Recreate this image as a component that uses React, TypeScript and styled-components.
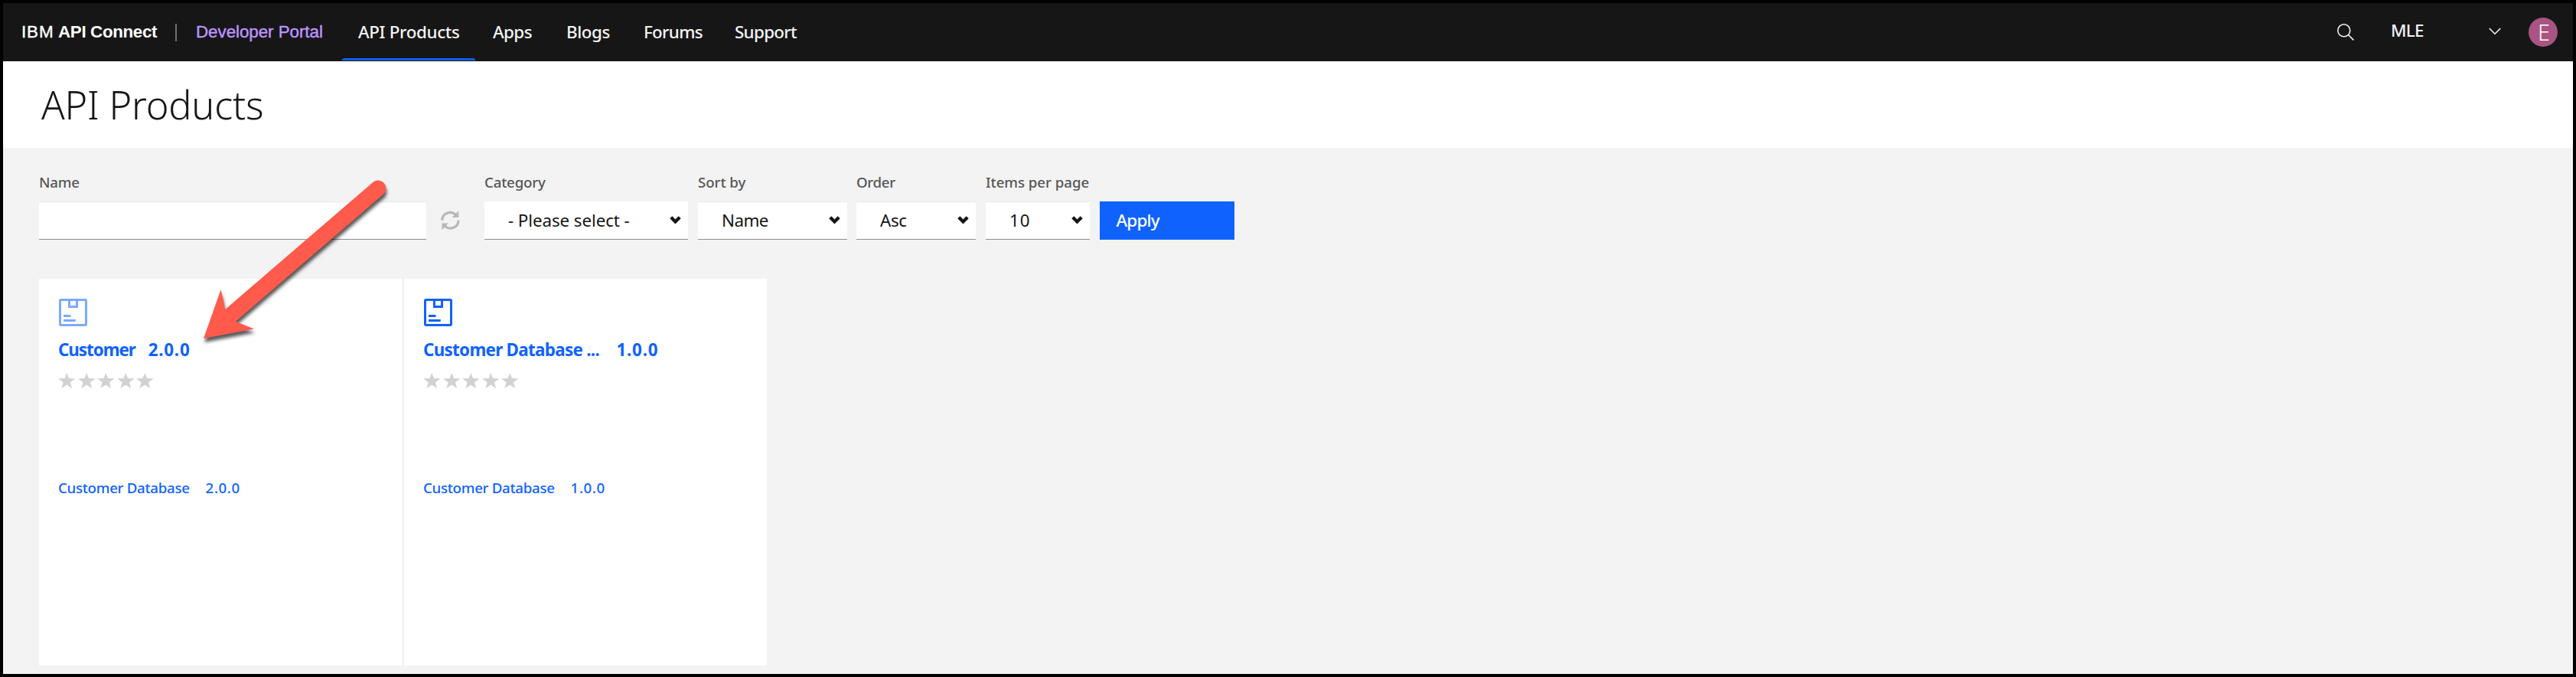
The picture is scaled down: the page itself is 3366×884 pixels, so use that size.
import React from 'react';
import styled, { createGlobalStyle } from 'styled-components';

const GlobalStyle = createGlobalStyle`
  * { box-sizing: border-box; }
  body { margin: 0; }
`;

const Page = styled.div`
  position: relative;
  display: flex;
  flex-direction: column;
  width: 3366px;
  height: 884px;
  border: 4px solid #000;
  background: #f3f3f3;
  color: #161616;
  font-family: 'Noto Sans', sans-serif;
  font-size: 22.4px;
  overflow: hidden;
`;

const Header = styled.header`
  display: flex;
  align-items: center;
  flex: none;
  height: 76px;
  padding: 0 20px 0 24px;
  background: #161616;
  color: #f4f4f4;
`;

const Brand = styled.div`
  display: flex;
  align-items: center;
  width: 418px;
  line-height: 30px;
  font-family: 'Liberation Sans', sans-serif;
  white-space: nowrap;
  color: #fff;
`;

const BrandPrefix = styled.span`
  width: 48px;
  letter-spacing: 0.9px;
  -webkit-text-stroke: 0.4px #fff;
`;

const BrandName = styled.strong`
  width: 153px;
  letter-spacing: -0.36px;
`;

const BrandDivider = styled.span`
  width: 2px;
  height: 23px;
  margin-right: 25px;
  background: #6f6f6f;
`;

const PortalName = styled.span`
  color: #be95ff;
  letter-spacing: -0.06px;
  -webkit-text-stroke: 0.4px #be95ff;
`;

const Nav = styled.nav`
  display: flex;
  height: 76px;
`;

const NavItem = styled.a<{ $width: number; $track: number; $active?: boolean }>`
  position: relative;
  width: ${p => p.$width}px;
  padding-left: 22px;
  line-height: 76px;
  font-weight: 500;
  letter-spacing: ${p => p.$track}px;
  white-space: nowrap;
  &::after {
    content: '';
    display: ${p => (p.$active ? 'block' : 'none')};
    position: absolute;
    left: 0;
    right: 0;
    bottom: 1px;
    height: 3px;
    background: #0f62fe;
    clip-path: polygon(3px 0, calc(100% - 3px) 0, 100% 100%, 0 100%);
  }
`;

const Tools = styled.div`
  display: flex;
  align-items: center;
  margin-left: auto;
`;

const OrgName = styled.span`
  width: 129px;
  margin-left: 48px;
  margin-right: -1px;
  padding-bottom: 4px;
  line-height: 30px;
  font-weight: 500;
  letter-spacing: -0.8px;
`;

const Avatar = styled.div`
  width: 38px;
  height: 38px;
  margin-left: 36px;
  padding-left: 2px;
  border-radius: 50%;
  background: #a95482;
  color: #fff;
  text-align: center;
  font-size: 29px;
  font-weight: 300;
  line-height: 38px;
`;

const TitleBar = styled.div`
  flex: none;
  height: 113px;
  padding-left: 50px;
  background: #fff;
`;

const Title = styled.h1`
  margin: 0;
  font-size: 50.5px;
  font-weight: 340;
  line-height: 113px;
  letter-spacing: -0.2px;
`;

const Content = styled.main`
  padding: 33px 0 0 47px;
`;

const Filters = styled.form`
  display: flex;
  align-items: flex-end;
`;

const Field = styled.div<{ $width: number; $gap?: number }>`
  display: flex;
  flex-direction: column;
  gap: 13px;
  width: ${p => p.$width}px;
  margin-right: ${p => p.$gap ?? 13}px;
`;

const Label = styled.label<{ $track?: number }>`
  color: #565656;
  font-size: 18.7px;
  font-weight: 500;
  line-height: 24px;
  letter-spacing: ${p => p.$track ?? -0.2}px;
  white-space: nowrap;
`;

const Control = styled.div<{ $flat?: boolean; $track?: number }>`
  display: flex;
  align-items: center;
  justify-content: space-between;
  height: 50px;
  padding: 0 9px 0 31px;
  border-bottom: 1px solid #8d8d8d;
  background: #fff;
  box-shadow: ${p => (p.$flat ? 'none' : 'inset 0 2px 2px -1px rgba(0, 0, 0, 0.1)')};
  letter-spacing: ${p => p.$track ?? -0.2}px;
  white-space: nowrap;
`;

const ResetSlot = styled.div`
  display: flex;
  align-items: center;
  width: 57px;
  height: 50px;
`;

const ApplyButton = styled.button`
  width: 176px;
  height: 50px;
  padding: 0 0 0 21.5px;
  border: 0;
  background: #0f62fe;
  color: #fff;
  font: inherit;
  font-weight: 500;
  line-height: 50px;
  letter-spacing: -0.8px;
  text-align: left;
`;

const Cards = styled.section`
  display: flex;
  gap: 3px;
  margin-top: 51px;
`;

const Card = styled.article`
  width: 474px;
  height: 505px;
  padding: 26px;
  background: #fff;
`;

const CardTitle = styled.div<{ $gap: number; $track: number }>`
  display: flex;
  gap: ${p => p.$gap}px;
  margin: 16px 0 0 -1px;
  color: #0f62fe;
  font-weight: 700;
  line-height: 30px;
  white-space: nowrap;
  span:first-child { letter-spacing: ${p => p.$track}px; }
  span:last-child { letter-spacing: 0.75px; }
`;

const Stars = styled.div`
  display: flex;
  gap: 3px;
  margin: 15px 0 118px -1px;
`;

const ApiLink = styled.div`
  display: flex;
  gap: 21px;
  margin-left: -1px;
  color: #0f62fe;
  font-size: 18.7px;
  font-weight: 500;
  line-height: 24px;
  letter-spacing: -0.3px;
  white-space: nowrap;
  span:last-child { letter-spacing: 0.6px; }
`;

const Block = styled.svg<{ $faded?: boolean }>`
  display: block;
  flex: none;
  opacity: ${p => (p.$faded ? 0.54 : 1)};
`;

const Pointer = styled.svg`
  position: absolute;
  left: 246px;
  top: 216px;
  overflow: visible;
  filter: drop-shadow(1px 5px 2px rgba(0, 0, 0, 0.65));
`;

const Caret = () => (
  <Block width="15" height="11" viewBox="0 0 15 11">
    <path d="M1.8 1.8 7.5 7.5l5.700-5.700" fill="none" stroke="#161616" strokeWidth="4.400" />
  </Block>
);

const Star = () => (
  <Block width="22.5" height="20" viewBox="0 0 22.5 20">
    <path d="M11.25 0 14 7.100 22.5 7.300 15.900 12.200 18.200 20 11.25 15.500 4.300 20 6.600 12.200 0 7.300 8.500 7.100Z" fill="#d2d2d2" />
  </Block>
);

const PackageIcon = ({ faded }: { faded?: boolean }) => (
  <Block $faded={faded} width="37" height="36" viewBox="0 0 37 36" fill="none" stroke="#0f62fe" strokeWidth="3">
    <rect x="1.5" y="1.5" width="34" height="33" rx="1.2" />
    <path d="M13.500 3V10.500H23.500V3M6 22.500h9.500M6 28.500h15.700" />
  </Block>
);

const navItems = [
  { name: 'API Products', width: 176, track: -0.35, active: true },
  { name: 'Apps', width: 96, track: -0.6 },
  { name: 'Blogs', width: 101, track: -0.45 },
  { name: 'Forums', width: 119, track: -0.7 },
  { name: 'Support', width: 124, track: -0.7 },
];

const selects = [
  { label: 'Category', value: '- Please select -', width: 266, gap: 13, track: -0.2, valueTrack: -0.1, flat: true },
  { label: 'Sort by', value: 'Name', width: 195, gap: 12, track: -0.05, valueTrack: -0.6 },
  { label: 'Order', value: 'Asc', width: 156, gap: 13, track: -0.3, valueTrack: -0.4 },
  { label: 'Items per page', value: '10', width: 136, gap: 13, track: -0.05, valueTrack: 0.9 },
];

const products = [
  { title: 'Customer', version: '2.0.0', api: 'Customer Database', gap: 17, track: -1.05, faded: true },
  { title: 'Customer Database ...', version: '1.0.0', api: 'Customer Database', gap: 22.5, track: -0.7 },
];

export default function App() {
  return (
    <Page>
      <GlobalStyle />
      <Header>
        <Brand>
          <BrandPrefix>IBM</BrandPrefix>
          <BrandName>API Connect</BrandName>
          <BrandDivider />
          <PortalName>Developer Portal</PortalName>
        </Brand>
        <Nav>
          {navItems.map(n => (
            <NavItem key={n.name} $width={n.width} $track={n.track} $active={n.active}>{n.name}</NavItem>
          ))}
        </Nav>
        <Tools>
          <Block width="22" height="22" viewBox="0 0 22 22" fill="none" stroke="#f4f4f4" strokeWidth="1.6">
            <circle cx="8.800" cy="8.800" r="8" />
            <path d="m14.500 14.500 6.900 6.900" />
          </Block>
          <OrgName>MLE</OrgName>
          <Block width="16" height="12" viewBox="0 0 16 12" fill="none" stroke="#f4f4f4" strokeWidth="1.6">
            <path d="M.8 1 8 8.200 15.200 1" />
          </Block>
          <Avatar>E</Avatar>
        </Tools>
      </Header>
      <TitleBar>
        <Title>API Products</Title>
      </TitleBar>
      <Content>
        <Filters>
          <Field $width={506} $gap={19}>
            <Label>Name</Label>
            <Control />
          </Field>
          <ResetSlot>
            <Block width="25" height="26" viewBox="0 0 25 26" fill="#b8b8b8">
              <path d="M1.700 12.700A10.400 10.400 0 0 1 19.500 5.500M23 12.700A10.400 10.400 0 0 1 5.200 20" fill="none" stroke="#b8b8b8" strokeWidth="3.200" />
              <path d="M23.300 .2V9H14.800ZM1.400 25.500V16.600H9.900Z" />
            </Block>
          </ResetSlot>
          {selects.map(s => (
            <Field key={s.label} $width={s.width} $gap={s.gap}>
              <Label $track={s.track}>{s.label}</Label>
              <Control $flat={s.flat} $track={s.valueTrack}>
                {s.value}
                <Caret />
              </Control>
            </Field>
          ))}
          <ApplyButton type="button">Apply</ApplyButton>
        </Filters>
        <Cards>
          {products.map(p => (
            <Card key={p.title}>
              <PackageIcon faded={p.faded} />
              <CardTitle $gap={p.gap} $track={p.track}>
                <span>{p.title}</span>
                <span>{p.version}</span>
              </CardTitle>
              <Stars>{[0, 1, 2, 3, 4].map(i => <Star key={i} />)}</Stars>
              <ApiLink>
                <span>{p.api}</span>
                <span>{p.version}</span>
              </ApiLink>
            </Card>
          ))}
        </Cards>
      </Content>
      <Pointer width="270" height="240" viewBox="0 0 270 240">
        <path d="M16 222 38.700 158 44.300 184 236.500 18.700A10.400 10.400 0 0 1 251.500 33.200L58 199.700 82 209.500Z" fill="#ff5a4c" />
      </Pointer>
    </Page>
  );
}
